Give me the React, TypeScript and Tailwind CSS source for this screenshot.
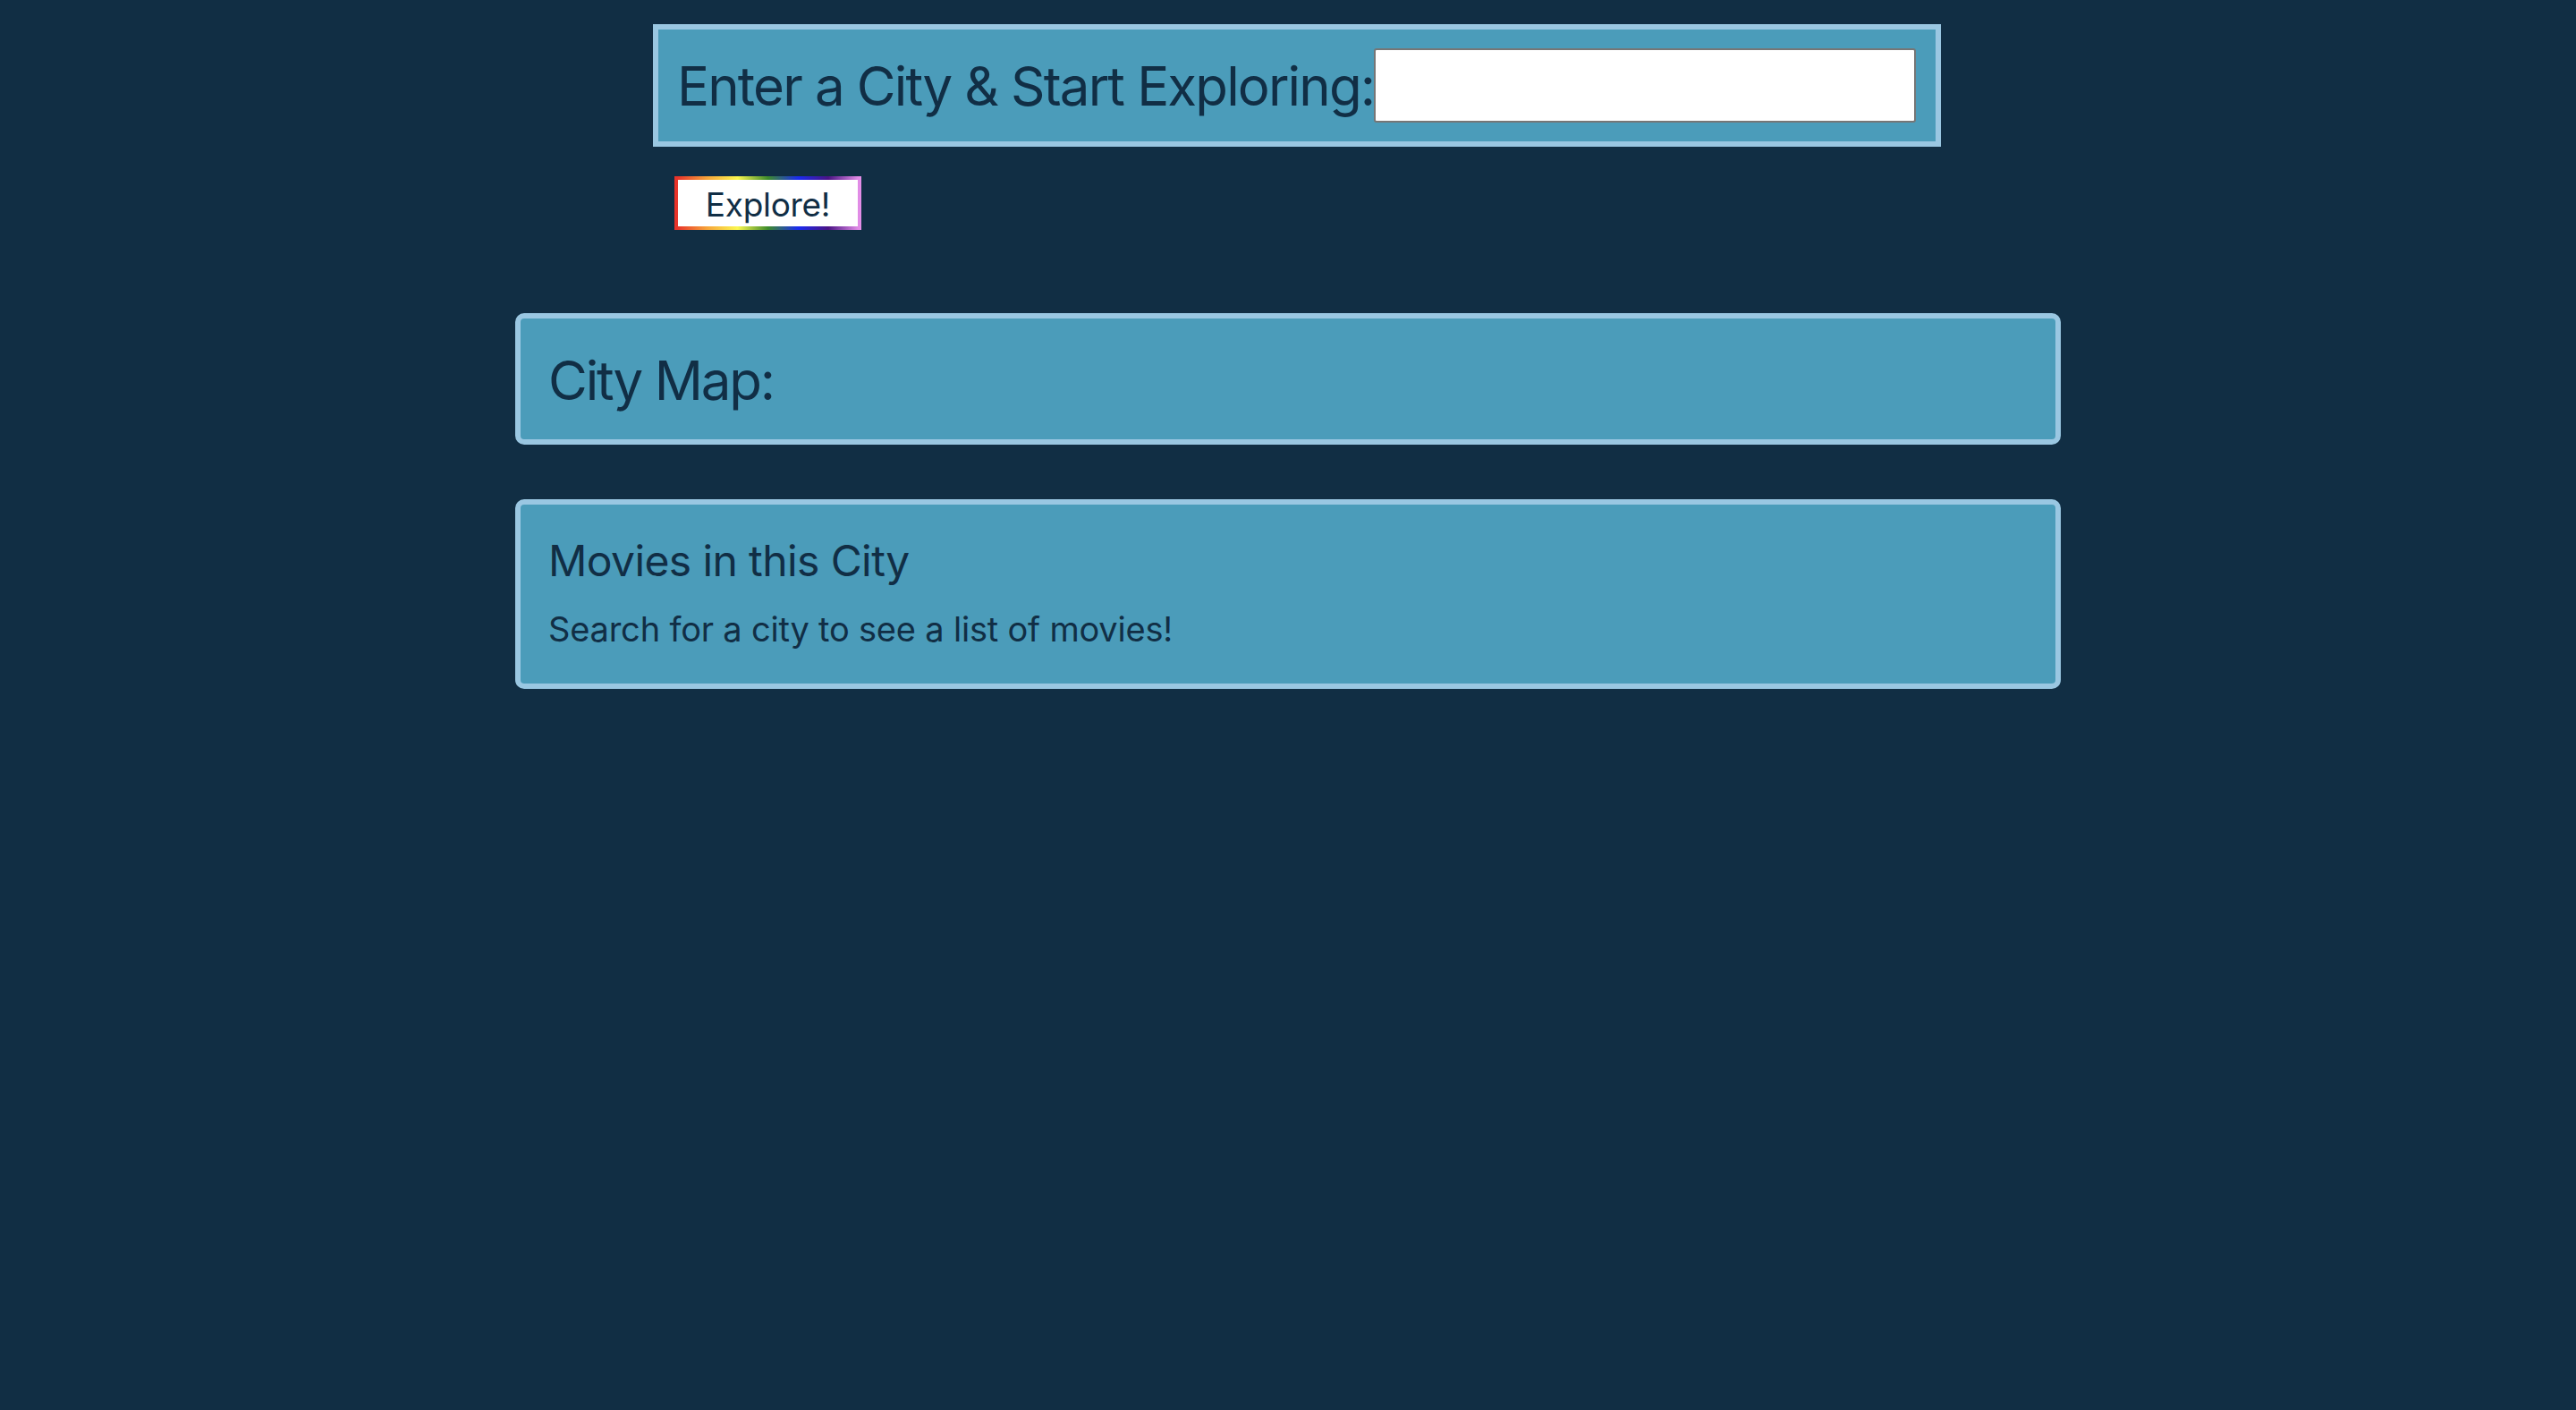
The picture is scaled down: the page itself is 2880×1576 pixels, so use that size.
export default function App() {
  return (
    <div className="min-h-screen w-full bg-[#112e44] pt-[27px] text-[#112e45] font-['Inter','Noto_Sans',sans-serif]">
      {/* search form */}
      <form className="ml-[730px] flex w-[1440px] items-center border-[6px] border-[#9ac7e2] bg-[#4b9cba] p-[21px]">
        <label className="shrink-0 text-[60px] leading-[1.2] tracking-[-1.85px] whitespace-nowrap">Enter a City &amp; Start Exploring:</label>
        <input
          type="text"
          className="h-[83px] w-[606px] shrink-0 rounded-[3px] border-2 border-[#767676] bg-white"
        />
      </form>
      <div className="ml-[754px] mt-[33px]">
        <button
          type="button"
          className="flex h-[60px] w-[209px] items-center justify-center border-4 bg-white pt-[2px] text-[37px] leading-none tracking-[-0.3px] [border-image:linear-gradient(to_right,#e8322a,#f7a53a,#fbf74f,#3d8b2b,#1a2bf0,#4b1385,#e48ee8)_1]"
        >
          Explore!
        </button>
      </div>

      {/* map */}
      <section className="mx-auto mt-[93px] h-[147px] w-[60%] rounded-[10px] border-[6px] border-[#9ac7e2] bg-[#4b9cba] px-[31px] pt-[33px]">
        <h1 className="text-[60px] leading-[1.2] tracking-[-2.2px]">City Map:</h1>
      </section>

      {/* movies */}
      <section className="mx-auto mt-[61px] h-[212px] w-[60%] rounded-[10px] border-[6px] border-[#9ac7e2] bg-[#4b9cba] px-[31px] pt-[34px]">
        <h2 className="text-[48px] leading-[1.2] tracking-[-0.6px]">Movies in this City</h2>
        <p className="mt-[25px] text-[38px] leading-[1.2] tracking-[-0.2px]">Search for a city to see a list of movies!</p>
      </section>
    </div>
  );
}
